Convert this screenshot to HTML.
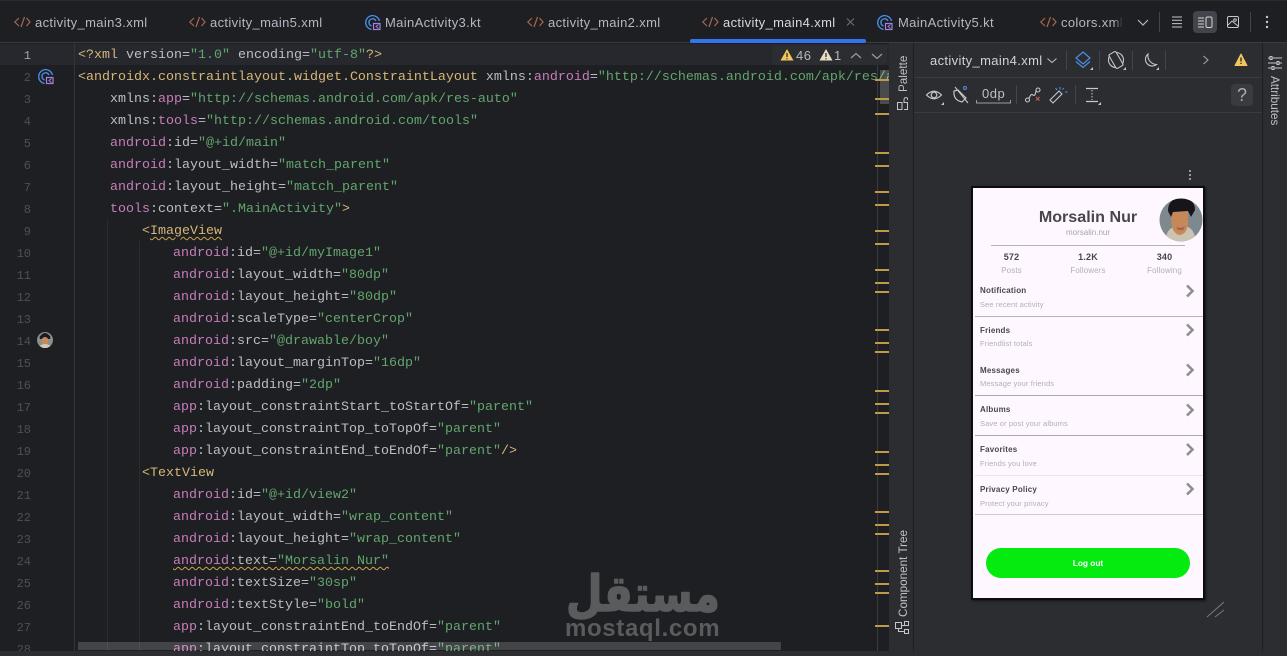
<!DOCTYPE html>
<html><head><meta charset="utf-8"><style>
html,body{margin:0;padding:0;background:#1e1f22}
#r{position:relative;width:1287px;height:656px;overflow:hidden;background:#1e1f22;font-family:"Liberation Sans",sans-serif}
.x{position:absolute}
.tab{position:absolute;top:14px;font-size:13px;line-height:17px;color:#b4b8c4;white-space:nowrap;letter-spacing:.35px}
.l{position:absolute;height:22px;line-height:22px;font-family:"Liberation Mono",monospace;font-size:13.33px;color:#bcbec4;white-space:pre;margin-top:1px}
.n{position:absolute;left:0;width:31px;text-align:right;height:22px;line-height:22px;font-family:"Liberation Mono",monospace;font-size:12px;color:#4b5059;margin-top:1px}
.t{color:#d5b778}.p{color:#c77dbb}.s{color:#62a56d}
.w{text-decoration:underline wavy #c9a34e 1px;text-underline-offset:2px}
.tick{position:absolute;left:875px;width:14px;height:2px;background:#c09a47}
.v{position:absolute;white-space:nowrap;color:#bcc0c8;font-size:11.700px;transform-origin:0 0;transform:rotate(-90deg)}
.c{position:absolute;text-align:center;white-space:nowrap;transform:translateX(-50%)}
.ph{position:absolute;white-space:nowrap;line-height:10px;margin-top:1px}
.h{font-weight:bold;font-size:8px;color:#49454f;letter-spacing:.2px}
.g{font-size:7.5px;color:#b2afb6;letter-spacing:.12px}
.d{position:absolute;left:975px;width:228px;height:1px}
</style></head><body><div id="r">

<div class="x" style="left:0;top:0;width:1287px;height:1px;background:#2e2a2a"></div>
<div class="x" style="left:0;top:42px;width:1287px;height:1px;background:#393b40"></div>

<svg class="x" style="left:0;top:0" width="1287" height="44" fill="none">
<defs><g id="xi" stroke="#a8674f" stroke-width="1.2"><path d="M5 5 L0.8 9 L5 13"/><path d="M10.5 4 L7 14"/><path d="M12.5 5 L16 9 L12.5 13"/></g>
<g id="ki"><path d="M14.500 6 A7 7 0 1 0 6.500 14.500" stroke="#4b8fe6" stroke-width="1.300"/><path d="M11 6 A3.700 3.700 0 1 0 6.500 11" stroke="#4b8fe6" stroke-width="1.300"/><rect x="8.500" y="8.500" width="6.500" height="6" stroke="#a57fe0" stroke-width="1.200"/><path d="M13.500 9.500 L11 11.500 L13.500 13.500" stroke="#a57fe0" stroke-width="1"/></g></defs>
<use href="#xi" x="14" y="13"/><use href="#xi" x="189" y="13"/><use href="#ki" x="365" y="15"/><use href="#xi" x="527" y="13"/><use href="#xi" x="702" y="13"/><use href="#ki" x="877" y="15"/><use href="#xi" x="1040" y="13"/>
<path d="M847 18.5 L854 25.5 M854 18.5 L847 25.5" stroke="#6f737a" stroke-width="1"/>
<path d="M1138 20 L1143 25 L1148 20" stroke="#b4b8c0" stroke-width="1.2"/>
<path d="M1159.500 12V32M1250.500 12V32" stroke="#43454a"/>
<path d="M1172 17H1182M1172 20.300H1182M1172 23.600H1182M1172 27H1182" stroke="#c4c7cc"/>
<rect x="1193" y="11" width="24" height="22" rx="4" fill="#43454a"/>
<path d="M1198 18H1204M1198 21H1204M1198 24H1204M1198 27H1204" stroke="#d0d3d8"/><rect x="1206" y="17" width="6" height="10.500" rx="1.500" stroke="#d0d3d8"/>
<rect x="1227.500" y="16.500" width="11" height="11" rx="1.500" stroke="#c4c7cc"/><path d="M1228 25 L1232 21 L1238 26" stroke="#c4c7cc"/><circle cx="1235" cy="20" r="1.300" stroke="#c4c7cc"/>
<circle cx="1267" cy="17" r="1.200" fill="#c4c7cc"/><circle cx="1267" cy="22" r="1.200" fill="#c4c7cc"/><circle cx="1267" cy="27" r="1.200" fill="#c4c7cc"/>
</svg>

<div class="tab" style="left:35px">activity_main3.xml</div>
<div class="tab" style="left:210px">activity_main5.xml</div>
<div class="tab" style="left:385px">MainActivity3.kt</div>
<div class="tab" style="left:548px">activity_main2.xml</div>
<div class="tab" style="left:723px;color:#d5d8de">activity_main4.xml</div>
<div class="tab" style="left:898px">MainActivity5.kt</div>
<div class="tab" style="left:1061px;width:62px;overflow:hidden;-webkit-mask-image:linear-gradient(90deg,#000 85%,transparent)">colors.xml</div>
<div class="x" style="left:690px;top:39px;width:176px;height:4px;background:#3574f0;border-radius:2px"></div>

<!-- editor -->
<div class="x" style="left:0;top:44px;width:889px;height:21px;background:#26282e"></div>
<div class="x" style="left:74px;top:43px;width:1px;height:609px;background:#313438"></div>
<div class="x" style="left:107px;top:219px;width:1px;height:433px;background:#2a2c30"></div>
<div class="x" style="left:139px;top:241px;width:1px;height:411px;background:#2a2c30"></div>
<div class="x" style="left:877px;top:65px;width:1px;height:587px;background:#393b40"></div>

<div class="n" style="top:44px;color:#a1a3ab">1</div><div class="n" style="top:66px">2</div><div class="n" style="top:88px">3</div><div class="n" style="top:110px">4</div><div class="n" style="top:132px">5</div><div class="n" style="top:154px">6</div><div class="n" style="top:176px">7</div><div class="n" style="top:198px">8</div><div class="n" style="top:220px">9</div><div class="n" style="top:242px">10</div><div class="n" style="top:264px">11</div><div class="n" style="top:286px">12</div><div class="n" style="top:308px">13</div><div class="n" style="top:330px">14</div><div class="n" style="top:352px">15</div><div class="n" style="top:374px">16</div><div class="n" style="top:396px">17</div><div class="n" style="top:418px">18</div><div class="n" style="top:440px">19</div><div class="n" style="top:462px">20</div><div class="n" style="top:484px">21</div><div class="n" style="top:506px">22</div><div class="n" style="top:528px">23</div><div class="n" style="top:550px">24</div><div class="n" style="top:572px">25</div><div class="n" style="top:594px">26</div><div class="n" style="top:616px">27</div><div class="n" style="top:638px;height:13px;overflow:hidden">28</div>

<svg class="x" style="left:0;top:0" width="60" height="360" fill="none">
<use href="#ki" x="38" y="69"/>
<circle cx="45" cy="340" r="8" fill="#8b8f92"/><path d="M39.500 337 Q45 329 50.500 337 L50 339 L40 339Z" fill="#1d1a1a"/><ellipse cx="45" cy="341" rx="3.500" ry="4" fill="#c58a60"/><path d="M39.500 346 Q45 342 50.500 346 L47 348 L43 348Z" fill="#cfc9ba"/>
</svg>

<div class="x" style="left:78px;top:0;width:811px;height:651px;overflow:hidden">
<div class="l" style="left:0;top:44px"><span style="color:#d5b778">&lt;?xml</span> version=<span class="s">"1.0"</span> encoding=<span class="s">"utf-8"</span><span class="t">?&gt;</span></div>
<div class="l" style="left:0;top:66px"><span class="t">&lt;androidx.constraintlayout.widget.ConstraintLayout</span> xmlns:<span class="p">android</span>=<span class="s">"http://schemas.android.com/apk/res/android"</span></div>
<div class="l" style="left:32px;top:88px">xmlns:<span class="p">app</span>=<span class="s">"http://schemas.android.com/apk/res-auto"</span></div>
<div class="l" style="left:32px;top:110px">xmlns:<span class="p">tools</span>=<span class="s">"http://schemas.android.com/tools"</span></div>
<div class="l" style="left:32px;top:132px"><span class="p">android</span>:id=<span class="s">"@+id/main"</span></div>
<div class="l" style="left:32px;top:154px"><span class="p">android</span>:layout_width=<span class="s">"match_parent"</span></div>
<div class="l" style="left:32px;top:176px"><span class="p">android</span>:layout_height=<span class="s">"match_parent"</span></div>
<div class="l" style="left:32px;top:198px"><span class="p">tools</span>:context=<span class="s">".MainActivity"</span><span class="t">&gt;</span></div>
<div class="l" style="left:64px;top:220px"><span class="t">&lt;<span class="w">ImageView</span></span></div>
<div class="l" style="left:95px;top:242px"><span class="p">android</span>:id=<span class="s">"@+id/myImage1"</span></div>
<div class="l" style="left:95px;top:264px"><span class="p">android</span>:layout_width=<span class="s">"80dp"</span></div>
<div class="l" style="left:95px;top:286px"><span class="p">android</span>:layout_height=<span class="s">"80dp"</span></div>
<div class="l" style="left:95px;top:308px"><span class="p">android</span>:scaleType=<span class="s">"centerCrop"</span></div>
<div class="l" style="left:95px;top:330px"><span class="p">android</span>:src=<span class="s">"@drawable/boy"</span></div>
<div class="l" style="left:95px;top:352px"><span class="p">android</span>:layout_marginTop=<span class="s">"16dp"</span></div>
<div class="l" style="left:95px;top:374px"><span class="p">android</span>:padding=<span class="s">"2dp"</span></div>
<div class="l" style="left:95px;top:396px"><span class="p">app</span>:layout_constraintStart_toStartOf=<span class="s">"parent"</span></div>
<div class="l" style="left:95px;top:418px"><span class="p">app</span>:layout_constraintTop_toTopOf=<span class="s">"parent"</span></div>
<div class="l" style="left:95px;top:440px"><span class="p">app</span>:layout_constraintEnd_toEndOf=<span class="s">"parent"</span><span class="t">/&gt;</span></div>
<div class="l" style="left:64px;top:462px"><span class="t">&lt;TextView</span></div>
<div class="l" style="left:95px;top:484px"><span class="p">android</span>:id=<span class="s">"@+id/view2"</span></div>
<div class="l" style="left:95px;top:506px"><span class="p">android</span>:layout_width=<span class="s">"wrap_content"</span></div>
<div class="l" style="left:95px;top:528px"><span class="p">android</span>:layout_height=<span class="s">"wrap_content"</span></div>
<div class="l" style="left:95px;top:550px"><span class="w"><span class="p">android</span>:text=<span class="s">"Morsalin Nur"</span></span></div>
<div class="l" style="left:95px;top:572px"><span class="p">android</span>:textSize=<span class="s">"30sp"</span></div>
<div class="l" style="left:95px;top:594px"><span class="p">android</span>:textStyle=<span class="s">"bold"</span></div>
<div class="l" style="left:95px;top:616px"><span class="p">app</span>:layout_constraintEnd_toEndOf=<span class="s">"parent"</span></div>
<div class="l" style="left:95px;top:638px"><span class="p">app</span>:layout_constraintTop_toTopOf=<span class="s">"parent"</span></div>
</div>

<!-- horizontal scrollbar -->
<div class="x" style="left:78px;top:642px;width:703px;height:8px;background:rgba(255,255,255,.17)"></div>
<!-- vertical thumb -->
<div class="x" style="left:880px;top:70px;width:9px;height:34px;background:rgba(255,255,255,.2)"></div>

<!-- inspection widget -->
<div class="x" style="left:772px;top:45px;width:115px;height:20px;background:#2b2d30;border-radius:0 0 4px 4px"></div>
<svg class="x" style="left:772px;top:45px" width="115" height="20" fill="none">
<path d="M15 4 L8.500 15.500 H21.500 Z" fill="#f2c55c"/><path d="M15 8V12M15 13.200V14.400" stroke="#2b2d30" stroke-width="1.300"/>
<path d="M7.500 15 L13 5" stroke="#2b2d30" stroke-width="1"/>
<path d="M54 4 L47.500 15.500 H60.500 Z" fill="#e8dfc3"/><path d="M54 8V12M54 13.200V14.400" stroke="#2b2d30" stroke-width="1.300"/>
<path d="M79 13 L84 8.500 L89 13M100 9 L105 13.500 L110 9" stroke="#9a9da3" stroke-width="1.200"/>
</svg>
<div class="x" style="left:796px;top:48px;font-size:13px;line-height:16px;color:#b4b8c0;letter-spacing:.5px">46</div>
<div class="x" style="left:834px;top:48px;font-size:13px;line-height:16px;color:#b4b8c0">1</div>

<!-- ticks -->
<div class="tick" style="top:79px"></div><div class="tick" style="top:98px"></div><div class="tick" style="top:113px"></div><div class="tick" style="top:152px"></div><div class="tick" style="top:165px"></div><div class="tick" style="top:191px"></div><div class="tick" style="top:204px"></div><div class="tick" style="top:230px"></div><div class="tick" style="top:243px"></div><div class="tick" style="top:269px"></div><div class="tick" style="top:282px"></div><div class="tick" style="top:291px"></div><div class="tick" style="top:329px"></div><div class="tick" style="top:342px"></div><div class="tick" style="top:351px"></div><div class="tick" style="top:390px"></div><div class="tick" style="top:403px"></div><div class="tick" style="top:412px"></div><div class="tick" style="top:451px"></div><div class="tick" style="top:464px"></div><div class="tick" style="top:473px"></div><div class="tick" style="top:511px"></div><div class="tick" style="top:524px"></div><div class="tick" style="top:533px"></div><div class="tick" style="top:570px"></div><div class="tick" style="top:583px"></div><div class="tick" style="top:592px"></div><div class="tick" style="top:625px"></div>

<!-- watermark -->
<svg class="x" style="left:540px;top:556px" width="200" height="64"><text x="103" y="55" text-anchor="middle" font-family="DejaVu Sans" font-weight="bold" font-size="50" fill="#5a5b5d" stroke="#5a5b5d" stroke-width="1.500" stroke-linejoin="round" textLength="154" lengthAdjust="spacingAndGlyphs">مستقل</text></svg>
<div class="x" style="left:565px;top:615px;font-size:24px;line-height:28px;font-weight:bold;color:#5a5b5d;letter-spacing:.65px">mostaql.com</div>

<!-- panels -->
<div class="x" style="left:889px;top:43px;width:398px;height:613px;background:#2b2d30"></div>
<div class="x" style="left:0;top:651px;width:1287px;height:5px;background:#2b2d30"></div>
<div class="x" style="left:913px;top:43px;width:1px;height:609px;background:#1e1f22"></div>
<div class="x" style="left:1262px;top:43px;width:1px;height:609px;background:#1e1f22"></div>
<div class="x" style="left:914px;top:77px;width:348px;height:1px;background:#393b40"></div>
<div class="x" style="left:914px;top:112px;width:348px;height:1px;background:#393b40"></div>

<div class="v" style="left:897px;top:92px">Palette</div>
<div class="v" style="left:897px;top:617px">Component Tree</div>
<div class="v" style="left:1281px;top:76px;transform:rotate(90deg)">Attributes</div>

<div class="x" style="left:930px;top:52px;font-size:13px;line-height:17px;color:#d0d3d9;letter-spacing:.35px">activity_main4.xml</div>
<div class="x" style="left:982px;top:86px;font-size:13px;line-height:15px;color:#bcc0c8;letter-spacing:.5px">0dp</div>
<div class="x" style="left:1231px;top:84px;width:22px;height:22px;border-radius:4px;background:#393b40;color:#a8abb0;font-size:18px;line-height:22px;text-align:center">?</div>

<svg class="x" style="left:889px;top:43px" width="398" height="80" fill="none" stroke="#c4c7cc">
<g transform="translate(-889,-43)">
<!-- side icons -->
<rect x="897.500" y="102.500" width="4.500" height="7" stroke="#c4c7cc"/><path d="M904 109.500H907.500V102.500H904V100Q904 97.500 906 97.500T907.500 100" stroke="#c4c7cc"/>
<path d="M1047.500 58.500 L1052 62.500 L1056.500 58.500" stroke="#b4b8c0" stroke-width="1.100"/>
<path d="M1066.500 51V70M1099.500 51V70M1132.500 51V70M1165.500 51V70M1016.500 85V104M1075.500 85V104" stroke="#43454a"/>
<!-- layers -->
<path d="M1083 52 L1090 58 L1083 64 L1076 58Z" stroke="#4b8fe6" stroke-width="1.200"/><path d="M1076 61.500 L1083 67.500 L1090 61.500" stroke="#4b8fe6" stroke-width="1.200"/>
<path d="M1093 67 L1090 70 H1093Z" fill="#c4c7cc" stroke="none"/>
<!-- rotate -->
<circle cx="1116" cy="60" r="7.500" stroke-width="1.100"/><rect x="1112" y="52" width="8" height="16" rx="1.500" transform="rotate(-30 1116 60)" fill="#2b2d30" stroke-width="1.100"/>
<path d="M1126 67 L1123 70 H1126Z" fill="#c4c7cc" stroke="none"/>
<!-- moon -->
<path d="M1148 54 A6.500 6.500 0 1 0 1156.500 64.500 A9 9 0 0 1 1148 54Z" stroke-width="1.100"/>
<path d="M1159 67 L1156 70 H1159Z" fill="#c4c7cc" stroke="none"/>
<path d="M1203.500 56 L1208 60 L1203.500 64" stroke="#a0a3a8" stroke-width="1.100"/>
<!-- warning -->
<path d="M1241 54 L1235 65.500 H1247 Z" fill="#f2c55c" stroke="#f2c55c" stroke-linejoin="round"/><path d="M1241 57.500V61.500M1241 62.800V64" stroke="#2b2d30" stroke-width="1.400"/>
<!-- eye -->
<path d="M926.500 95 Q934 87.500 941.500 95 Q934 102.500 926.500 95Z" stroke-width="1.200"/><circle cx="934" cy="95" r="2.800" stroke-width="1.200"/>
<path d="M944 102 L941 105 H944Z" fill="#c4c7cc" stroke="none"/>
<!-- magnet -->
<path d="M954 91 Q953 100 962 102 L966 98 L958 90Z" stroke-width="1.200"/><path d="M955 87 L968 103" stroke-width="1.100"/><circle cx="965" cy="88" r="1.500" stroke="#4b8fe6"/>
<!-- bracket -->
<path d="M976.500 100V103H1010.500V100" stroke="#9a9da3"/>
<!-- path -->
<circle cx="1027.500" cy="100" r="2" stroke-width="1.100"/><circle cx="1038" cy="90" r="2" stroke-width="1.100"/><path d="M1029 98.500 Q1031 93 1033 95 T1036 91" stroke-width="1.100"/><path d="M1036 97 L1039.500 100.500M1039.500 97 L1036 100.500" stroke="#c0645a" stroke-width="1.100"/>
<!-- wand -->
<path d="M1053 103 L1050 100 L1059 91 L1062 94Z" stroke-width="1.100"/><path d="M1060 87V89.500M1065 92H1067.500M1064 88 L1062.500 89.500M1055.500 88 L1057 90" stroke="#4b8fe6" stroke-width="1.100"/>
<!-- spacing -->
<path d="M1086 88.500H1098M1086 101.500H1098" stroke-width="1.200"/><path d="M1092 90V100" stroke-dasharray="1.500 1.500"/>
<path d="M1101 102 L1098 105 H1101Z" fill="#c4c7cc" stroke="none"/>
</g>
</svg>
<svg class="x" style="left:1263px;top:52px" width="24" height="20" fill="none" stroke="#c4c7cc">
<path d="M5 6H19M5 11H19M5 16H19" /><rect x="7" y="4.500" width="2" height="3" fill="#2b2d30"/><rect x="14" y="9.500" width="2" height="3" fill="#2b2d30"/><rect x="9" y="14.500" width="2" height="3" fill="#2b2d30"/>
</svg>
<svg class="x" style="left:889px;top:610px" width="24" height="30" fill="none" stroke="#c4c7cc">
<rect x="6.500" y="12.500" width="6" height="6"/><rect x="15.500" y="11.500" width="4" height="4"/><rect x="15.500" y="19.500" width="4" height="4"/><path d="M12.500 15.500H15.500M9.500 18.500V21.500H15.500"/>
</svg>

<!-- kebab & hatch -->
<svg class="x" style="left:1180px;top:165px" width="60" height="460" fill="none">
<circle cx="10" cy="6" r="1" fill="#b8bbc0"/><circle cx="10" cy="10" r="1" fill="#b8bbc0"/><circle cx="10" cy="14" r="1" fill="#b8bbc0"/>
<path d="M27 452 L44 437M35 452 L44 445" stroke="#77797d"/>
</svg>

<!-- phone -->
<div class="x" style="left:971px;top:186px;width:234px;height:414px;background:#0c0c0d;border-radius:1px;box-shadow:1px 1px 2px #151618"></div>
<div class="x" style="left:973px;top:188px;width:230px;height:410px;background:#fef7ff"></div>
<div class="c" style="left:1088px;top:208px;font-size:16.100px;line-height:18px;font-weight:bold;color:#49454f">Morsalin Nur</div>
<div class="c" style="left:1088px;top:228px;font-size:8px;line-height:10px;color:#a7a5ab">morsalin.nur</div>
<svg class="x" style="left:1158px;top:197px" width="46" height="46">
<defs><clipPath id="cp"><circle cx="23" cy="23" r="21.500"/></clipPath></defs>
<g clip-path="url(#cp)"><rect width="46" height="46" fill="#7d898e"/>
<path d="M7 46 Q8 32 16 30 L30 30 Q37 33 38 46Z" fill="#cbc4b2"/>
<path d="M13 13 L30 13 L30 28 Q28 38 21 38 Q14 36 13 24Z" fill="#c48859"/>
<path d="M18 30 Q23 32 27 29 L25 33 H20Z" fill="#a9604a"/>
<path d="M10 14 Q10 1 24 1 Q37 2 37 13 L33 20 L30 14 L15 15 L13 20Z" fill="#17151a"/></g>
</svg>
<div class="x" style="left:991px;top:245px;width:194px;height:1px;background:#b4b1b7"></div>
<div class="c h" style="left:1011.500px;top:252px;font-size:9px;line-height:10px">572</div>
<div class="c g" style="left:1011.500px;top:266px;font-size:8px;line-height:10px">Posts</div>
<div class="c h" style="left:1088px;top:252px;font-size:9px;line-height:10px">1.2K</div>
<div class="c g" style="left:1088px;top:266px;font-size:8px;line-height:10px">Followers</div>
<div class="c h" style="left:1164.500px;top:252px;font-size:9px;line-height:10px">340</div>
<div class="c g" style="left:1164.500px;top:266px;font-size:8px;line-height:10px">Following</div>

<div class="ph h" style="left:980px;top:285px">Notification</div><div class="ph g" style="left:980px;top:299px">See recent activity</div>
<div class="ph h" style="left:980px;top:325px">Friends</div><div class="ph g" style="left:980px;top:338px">Friendlist totals</div>
<div class="ph h" style="left:980px;top:365px">Messages</div><div class="ph g" style="left:980px;top:378px">Message your friends</div>
<div class="ph h" style="left:980px;top:404px">Albums</div><div class="ph g" style="left:980px;top:418px">Save or post your albums</div>
<div class="ph h" style="left:980px;top:444px">Favorites</div><div class="ph g" style="left:980px;top:458px">Friends you love</div>
<div class="ph h" style="left:980px;top:484px">Privacy Policy</div><div class="ph g" style="left:980px;top:498px">Protect your privacy</div>

<div class="d" style="top:316px;background:#b8b6bb"></div>
<div class="d" style="top:395px;background:#aaa9ad"></div>
<div class="d" style="top:435px;background:#aaa9ad"></div>
<div class="d" style="top:475px;background:#e8e4ea"></div>
<div class="d" style="top:514px;background:#ccc9cf"></div>

<svg class="x" style="left:1180px;top:280px" width="20" height="220" fill="none" stroke="#8f8f92" stroke-width="2.600">
<path d="M7 5.500 L12.500 11 L7 16.500"/><path d="M7 44.500 L12.500 50 L7 55.500"/><path d="M7 84.500 L12.500 90 L7 95.500"/><path d="M7 124.500 L12.500 130 L7 135.500"/><path d="M7 164 L12.500 169.500 L7 175"/><path d="M7 203.500 L12.500 209 L7 214.500"/>
</svg>

<div class="x" style="left:986px;top:548px;width:204px;height:30px;border-radius:15px;background:#05eb10;color:#fff;font-size:8.300px;font-weight:bold;line-height:31px;text-align:center">Log out</div>

</div></body></html>
